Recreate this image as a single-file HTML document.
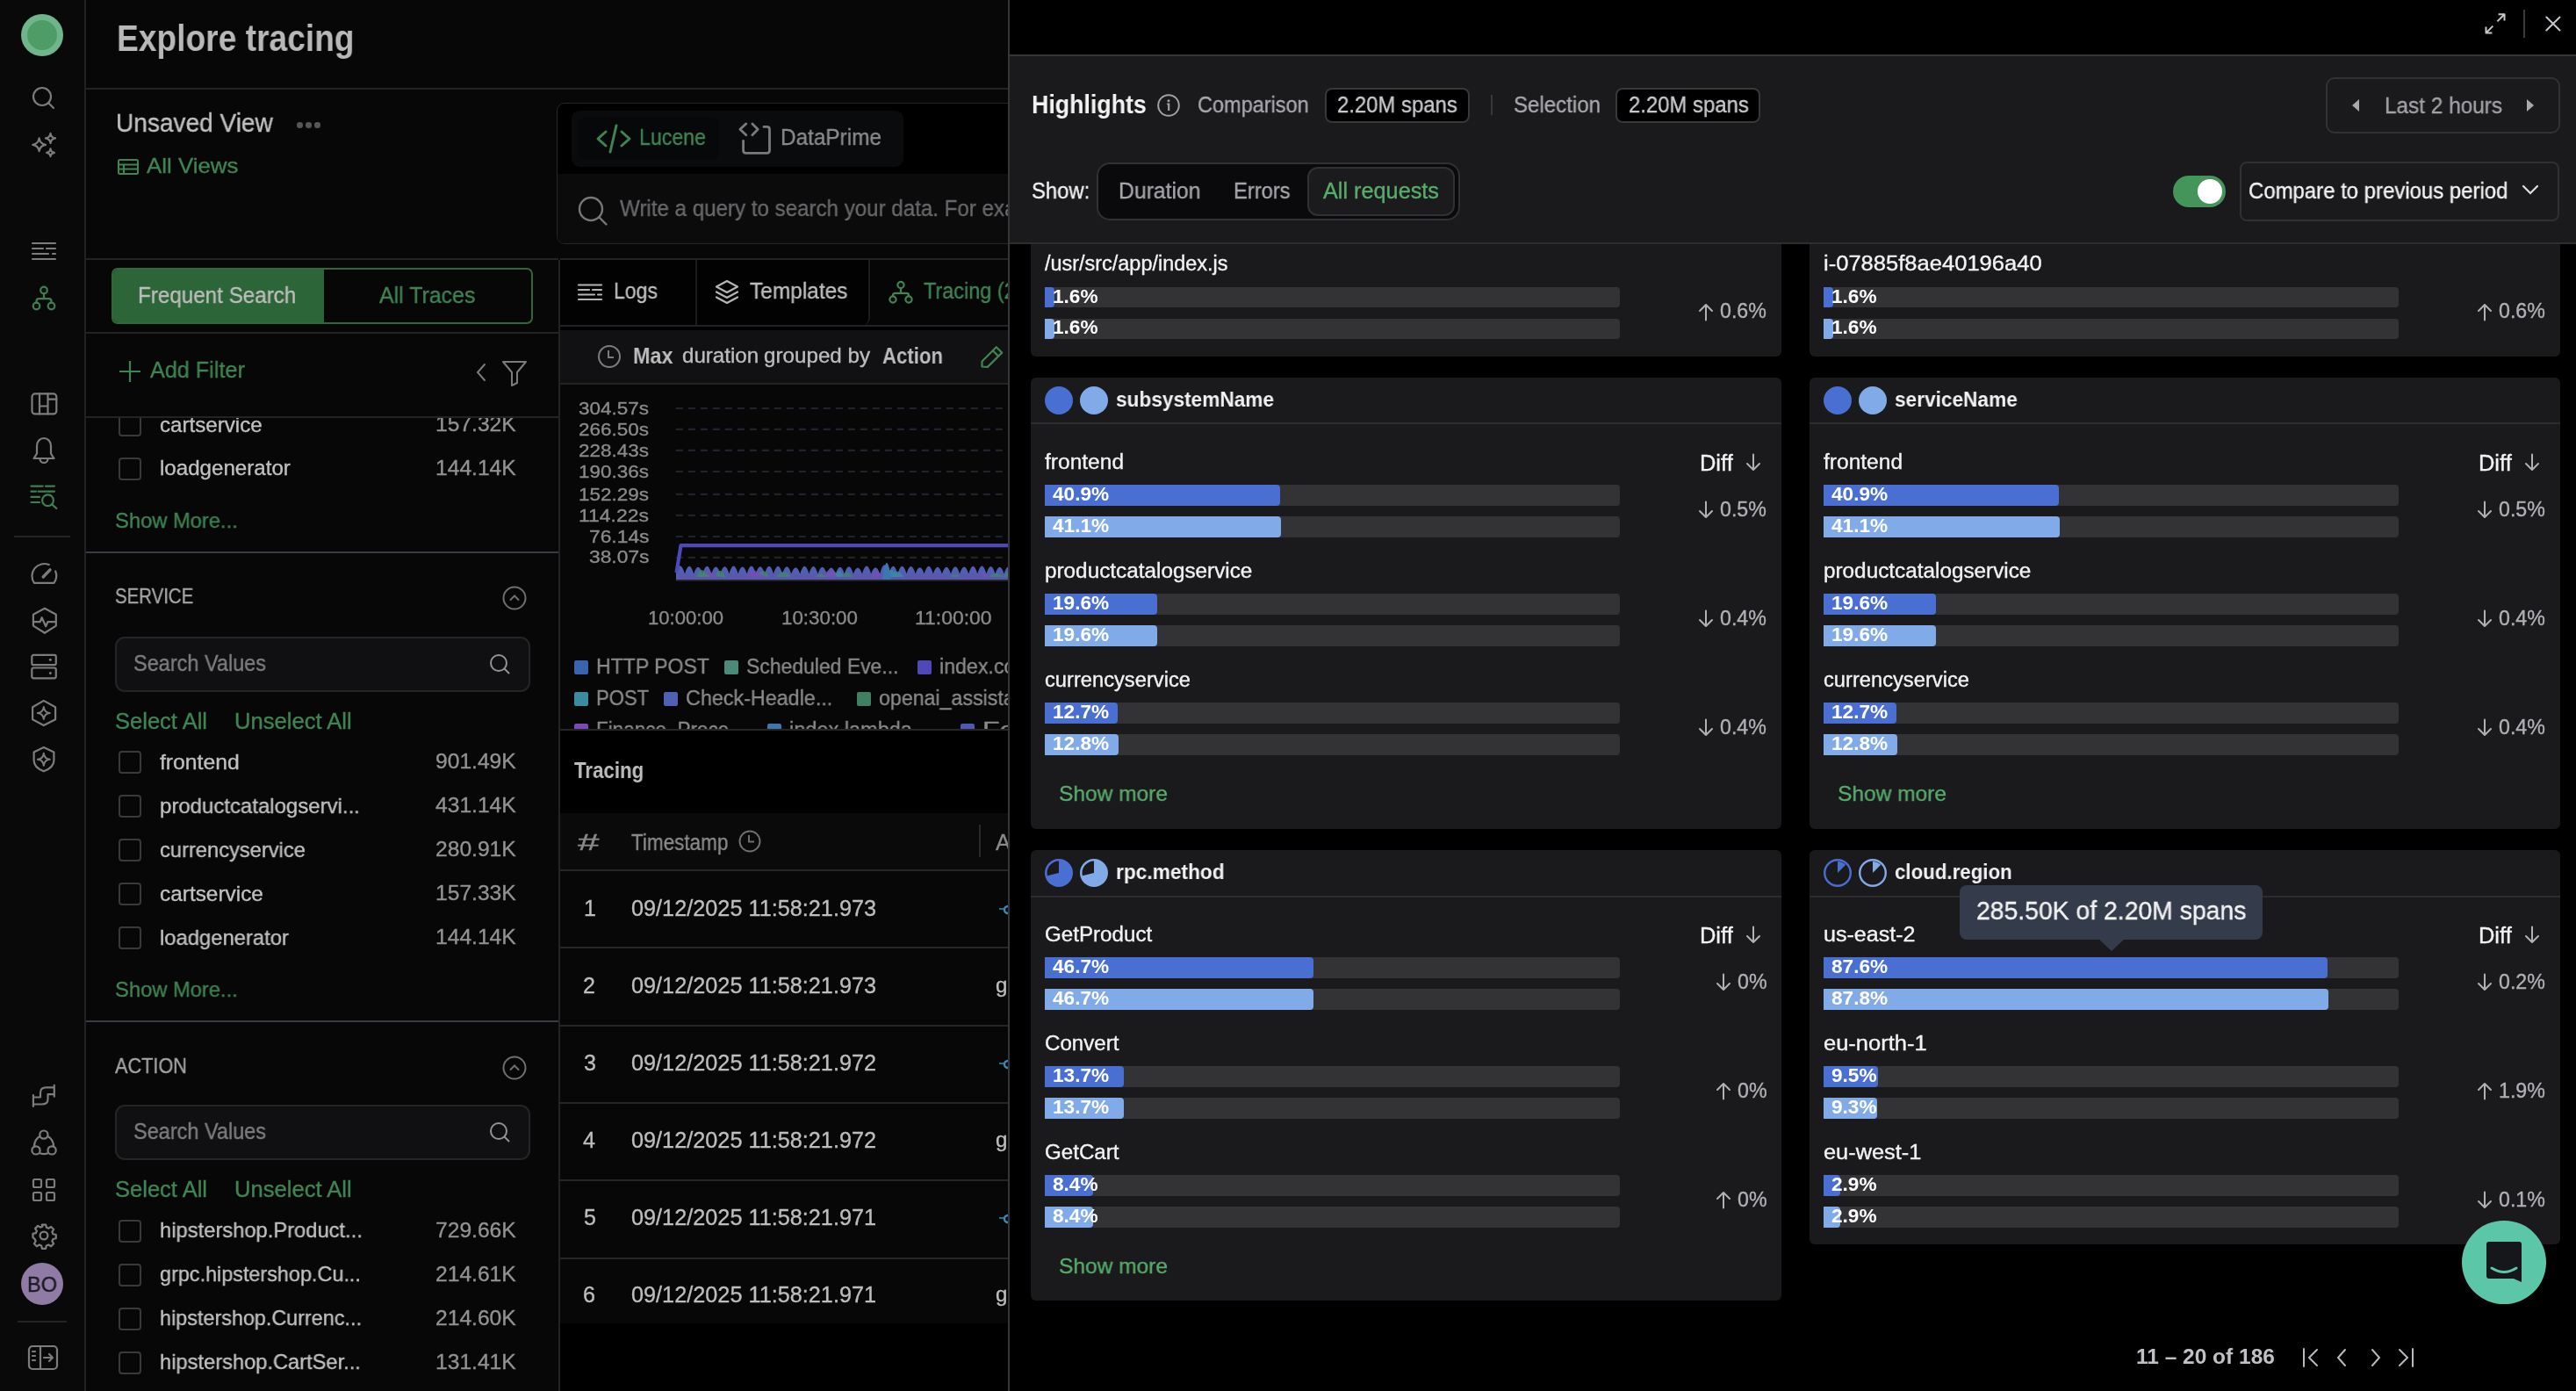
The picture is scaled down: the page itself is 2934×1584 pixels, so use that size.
<!DOCTYPE html>
<html><head><meta charset="utf-8">
<style>
*{box-sizing:border-box;margin:0;padding:0}
html,body{width:2934px;height:1584px;overflow:hidden;background:#070707;font-family:"Liberation Sans",sans-serif;}
.a{position:absolute}
.t{position:absolute;white-space:nowrap;line-height:1;will-change:transform;-webkit-text-stroke:0.35px currentColor}
svg{position:absolute;overflow:visible}
.ic{fill:none;stroke:#7c7c7c;stroke-width:2.2;stroke-linecap:round;stroke-linejoin:round}
.icg{fill:none;stroke:#3d7f50;stroke-width:2.2;stroke-linecap:round;stroke-linejoin:round}
</style></head>
<body>
<div class="a" style="left:0.0px;top:0.0px;width:96.0px;height:1584.0px;background:#090909;"></div>
<div class="a" style="left:96.0px;top:0.0px;width:2.0px;height:1584.0px;background:#222222;"></div>
<div class="a" style="left:24px;top:16px;width:48px;height:48px;border-radius:50%;background:#6fb48b"></div>
<div class="a" style="left:31px;top:23px;width:34px;height:34px;border-radius:50%;background:#4f9d66"></div>
<svg style="left:37px;top:99px;" width="26" height="26" viewBox="0 0 26 26"><circle class="ic" cx="11" cy="11" r="10"/><path class="ic" d="M18.5 18.5l5.5 5.5"/></svg>
<svg style="left:35px;top:150px;" width="30" height="30" viewBox="0 0 30 30"><path class="ic" d="M9.6 7.4Q10.56 13.84 17.0 14.8Q10.56 15.76 9.6 22.200000000000003Q8.64 15.76 2.1999999999999993 14.8Q8.64 13.84 9.6 7.4Z"/><path class="ic" d="M22.5 1.8000000000000007Q23.23 6.67 28.1 7.4Q23.23 8.13 22.5 13.0Q21.77 8.13 16.9 7.4Q21.77 6.67 22.5 1.8000000000000007Z"/><path class="ic" d="M22.5 19.4Q23.07 23.23 26.9 23.8Q23.07 24.37 22.5 28.200000000000003Q21.93 24.37 18.1 23.8Q21.93 23.23 22.5 19.4Z"/></svg>
<svg style="left:36px;top:276px;" width="28" height="22" viewBox="0 0 28 22"><path class="ic" d="M1 1h26M1 7h12M17 7h10M1 13h18M24 13h3M1 19h26"/></svg>
<svg style="left:36px;top:326px;" width="28" height="28" viewBox="0 0 28 28"><circle class="icg" cx="14" cy="4.5" r="3.8"/><circle class="icg" cx="5.5" cy="22.5" r="3.8"/><circle class="icg" cx="22.5" cy="22.5" r="3.8"/><path class="icg" d="M14 8.3v6M5.5 18.7v-1.5q0-3 3-3h11q3 0 3 3v1.5"/></svg>
<svg style="left:35px;top:447px;" width="30" height="26" viewBox="0 0 30 26"><rect class="ic" x="1.5" y="1.4" width="27.8" height="23" rx="3.5"/><path class="ic" d="M10 1.4v23M19.5 1.4v23M10 15.5h9.5M19.5 7.7h9.8"/></svg>
<svg style="left:37px;top:496px;" width="26" height="34" viewBox="0 0 26 34"><path class="ic" d="M1.5 26Q3.5 23 5 20.5V12C5 6.5 8.5 3 13 3S21 6.5 21 12V20.5Q22.5 23 24.5 26Z"/><path class="ic" d="M8.5 26.5A4.5 4.5 0 0 0 17.5 26.5"/></svg>
<svg style="left:35px;top:550px;" width="32" height="32" viewBox="0 0 32 32"><path class="icg" d="M0.5 3.6h13.2M17 3.6h10M0.5 9.7h5.5M8.6 9.7h18.4M0.5 15.9h9.5M0.5 22h9.5"/><circle class="icg" cx="19.5" cy="19.7" r="6.4"/><path class="icg" d="M24.2 24.4L29.3 28.9"/></svg>
<div class="a" style="left:16.0px;top:610.0px;width:64.0px;height:2.0px;background:#242424;"></div>
<svg style="left:35px;top:640px;" width="30" height="28" viewBox="0 0 30 28"><path class="ic" d="M28.2 10.5A13.9 13.9 0 0 1 26.5 23.8H3.9A13.9 13.9 0 0 1 20.7 3.1"/><path class="ic" style="stroke-width:3.4" d="M14.2 17L22 8.9"/></svg>
<svg style="left:36px;top:692px;" width="30" height="30" viewBox="0 0 30 30"><path class="ic" d="M14.9 0.8L27.8 7.7V20.6L14.9 28.8L1.9 20.6V7.7Z"/><path class="ic" d="M1.9 16.1H9.7L11.6 11.2L16.2 21.3L18.4 16.1H27.8"/></svg>
<svg style="left:35px;top:745px;" width="30" height="30" viewBox="0 0 30 30"><rect class="ic" x="1.3" y="0.9" width="27.5" height="11.3" rx="2"/><rect class="ic" x="1.3" y="15.5" width="27.5" height="11.8" rx="2"/><circle cx="22.3" cy="6.3" r="1.5" fill="#7c7c7c"/><circle cx="22.3" cy="21.4" r="1.5" fill="#7c7c7c"/></svg>
<svg style="left:36px;top:797px;" width="30" height="30" viewBox="0 0 30 30"><path class="ic" d="M13.8 0.9L27.1 8.2V22.2L13.8 29L1.1 22.2V8.2Z"/><path class="ic" style="stroke-width:2" d="M13.8 8Q14.50 14.30 20.8 15Q14.50 15.70 13.8 22Q13.10 15.70 6.800000000000001 15Q13.10 14.30 13.8 8Z"/></svg>
<svg style="left:37px;top:850px;" width="28" height="30" viewBox="0 0 28 30"><path class="ic" d="M12.8 1L24.4 6.4V16Q24.4 24 12.8 28.3Q1.6 24 1.6 16V6.4Z"/><path class="ic" style="stroke-width:2" d="M12.8 7.800000000000001Q13.50 14.10 19.8 14.8Q13.50 15.50 12.8 21.8Q12.10 15.50 5.800000000000001 14.8Q12.10 14.10 12.8 7.800000000000001Z"/></svg>
<svg style="left:36px;top:1234px;" width="28" height="28" viewBox="0 0 28 28"><path class="ic" d="M1.9 13V25.9M25.8 1.8V14.7M25.8 4.3H16.5Q10 4.3 10 10.5V15.5H1.9M25.8 12.2H18.5V18Q18.5 23.5 11.5 23.5H1.9"/></svg>
<svg style="left:35px;top:1286px;" width="30" height="30" viewBox="0 0 30 30"><circle class="ic" cx="14.9" cy="6.1" r="4.6"/><circle class="ic" cx="6" cy="23.9" r="4.6"/><circle class="ic" cx="24.1" cy="23.9" r="4.6"/><path class="ic" d="M10 8.2Q4.2 11.5 3.9 19.6M19.8 8.2Q25.8 11.5 26.1 19.6M10.5 27.3Q15 29 19.6 27.3"/></svg>
<svg style="left:37px;top:1342px;" width="26" height="26" viewBox="0 0 26 26"><rect class="ic" x="1" y="1" width="9" height="9" rx="1.5"/><rect class="ic" x="16" y="1" width="9" height="9" rx="1.5"/><rect class="ic" x="1" y="16" width="9" height="9" rx="1.5"/><rect class="ic" x="16" y="16" width="9" height="9" rx="1.5"/></svg>
<svg style="left:35px;top:1392px" width="30" height="30" viewBox="0 0 24 24"><path class="ic" style="stroke-width:1.8" d="M10.3 2h3.4l.6 2.6 1.9.8 2.3-1.4 2.4 2.4-1.4 2.3.8 1.9 2.7.6v3.4l-2.7.6-.8 1.9 1.4 2.3-2.4 2.4-2.3-1.4-1.9.8-.6 2.7h-3.4l-.6-2.7-1.9-.8-2.3 1.4-2.4-2.4 1.4-2.3-.8-1.9L2 13.7v-3.4l2.7-.6.8-1.9-1.4-2.3 2.4-2.4 2.3 1.4 1.9-.8z"/><circle class="ic" style="stroke-width:1.8" cx="12" cy="12" r="3.5"/></svg>
<div class="a" style="left:24px;top:1438px;width:48px;height:48px;border-radius:50%;background:#8f7ba6"></div>
<div class="t" style="left:31.0px;top:1451.1px;font-size:24.65px;color:#1c1a20;transform:scaleX(0.9547);transform-origin:0 0;">BO</div>
<div class="a" style="left:20.0px;top:1504.0px;width:56.0px;height:2.0px;background:#242424;"></div>
<svg style="left:32px;top:1532px;" width="34" height="28" viewBox="0 0 34 28"><rect class="ic" x="1" y="1" width="32" height="26" rx="4"/><path class="ic" d="M14 1v26M5 7h3M5 12h3M5 17h3M18 14h10M24 10l4 4-4 4"/></svg>
<div class="t" style="left:132.6px;top:23.3px;font-size:42.01px;color:#b8b8b8;font-weight:bold;-webkit-text-stroke:0;transform:scaleX(0.8849);transform-origin:0 0;">Explore tracing</div>
<div class="a" style="left:98.0px;top:100.0px;width:1052.0px;height:2.0px;background:#232323;"></div>
<div class="t" style="left:131.6px;top:126.4px;font-size:29.07px;color:#c0c0c0;transform:scaleX(0.9650);transform-origin:0 0;">Unsaved View</div>
<div class="a" style="left:338px;top:139px;width:6.5px;height:6.5px;border-radius:50%;background:#55555a"></div>
<div class="a" style="left:348px;top:139px;width:6.5px;height:6.5px;border-radius:50%;background:#55555a"></div>
<div class="a" style="left:358px;top:139px;width:6.5px;height:6.5px;border-radius:50%;background:#55555a"></div>
<svg style="left:134px;top:181px;" width="24" height="18" viewBox="0 0 24 18"><rect x="1" y="1" width="22" height="16" rx="1.5" fill="none" stroke="#3e8552" stroke-width="2"/><path d="M1 6.5h22M1 11.5h22M7 6.5v10.5" stroke="#3e8552" stroke-width="2" fill="none"/></svg>
<div class="t" style="left:166.6px;top:177.1px;font-size:24.71px;color:#3e8552;transform:scaleX(1.0462);transform-origin:0 0;">All Views</div>
<div class="a" style="left:98.0px;top:294.0px;width:538.0px;height:2.0px;background:#232323;"></div>
<div class="a" style="left:127px;top:305px;width:480px;height:64px;border:2px solid #2c6a3a;border-radius:7px;overflow:hidden"><div class="a" style="left:0;top:0;width:240px;height:64px;background:#2c6538"></div></div>
<div class="t" style="left:156.7px;top:323.5px;font-size:25.44px;color:#bdbdbd;transform:scaleX(0.9516);transform-origin:0 0;">Frequent Search</div>
<div class="t" style="left:432.0px;top:323.5px;font-size:25.44px;color:#3e8552;transform:scaleX(0.9797);transform-origin:0 0;">All Traces</div>
<div class="a" style="left:98.0px;top:378.0px;width:538.0px;height:2.0px;background:#232323;"></div>
<svg style="left:135px;top:410px;" width="26" height="26" viewBox="0 0 26 26"><path d="M13 1v24M1 13h24" stroke="#3e8552" stroke-width="2.2" fill="none"/></svg>
<div class="t" style="left:170.5px;top:408.8px;font-size:25.44px;color:#3e8552;transform:scaleX(0.9904);transform-origin:0 0;">Add Filter</div>
<svg style="left:541px;top:413px;" width="14" height="22" viewBox="0 0 14 22"><path d="M11 2L3 11l8 9" stroke="#7c7c7c" stroke-width="2" fill="none" stroke-linecap="round"/></svg>
<svg style="left:571px;top:410px;" width="30" height="30" viewBox="0 0 30 30"><path d="M2 2h26l-10 12v12l-6 3V14z" stroke="#7c7c7c" stroke-width="2" fill="none" stroke-linejoin="round"/></svg>
<div class="a" style="left:98.0px;top:474.0px;width:538.0px;height:2.0px;background:#232323;"></div>
<div class="a" style="left:98px;top:476px;width:538px;height:152px;overflow:hidden">
<div class="a" style="left:0;top:0;width:538px;height:152px">
<div class="a" style="left:37px;top:-5px;width:26px;height:26px;border:2px solid #3a3a3a;border-radius:4px"></div>
<div class="t" style="left:84.4px;top:-4.4px;font-size:24.14px;color:#c0c0c0;">cartservice</div>
<div class="t" style="left:398.2px;top:-4.9px;font-size:24.64px;color:#929292;">157.32K</div>
<div class="a" style="left:37px;top:44.60000000000002px;width:26px;height:26px;border:2px solid #3a3a3a;border-radius:4px"></div>
<div class="t" style="left:84.4px;top:45.2px;font-size:24.14px;color:#c0c0c0;">loadgenerator</div>
<div class="t" style="left:398.2px;top:44.7px;font-size:24.64px;color:#929292;">144.14K</div>
<div class="t" style="left:32.8px;top:105.4px;font-size:23.84px;color:#3e8552;transform:scaleX(0.9955);transform-origin:0 0;">Show More...</div>
</div></div>
<div class="a" style="left:98.0px;top:628.0px;width:538.0px;height:2.0px;background:#373b46;"></div>
<div class="t" style="left:130.8px;top:667.9px;font-size:23.26px;color:#a6a6a6;transform:scaleX(0.8773);transform-origin:0 0;">SERVICE</div>
<svg style="left:572px;top:666.6px;" width="28" height="28" viewBox="0 0 28 28"><circle cx="14" cy="14" r="12.5" stroke="#6f6f6f" stroke-width="2" fill="none"/><path d="M9.5 16l4.5-4.5 4.5 4.5" stroke="#6f6f6f" stroke-width="2" fill="none" stroke-linecap="round"/></svg>
<div class="a" style="left:130.5px;top:724.5px;width:473px;height:63px;background:#101012;border:2px solid #252527;border-radius:11px"></div>
<div class="t" style="left:152.4px;top:742.8px;font-size:25.00px;color:#7e7e80;transform:scaleX(0.9394);transform-origin:0 0;">Search Values</div>
<svg style="left:557px;top:743.5px;" width="26" height="26" viewBox="0 0 26 26"><circle cx="11" cy="11" r="9" stroke="#939393" stroke-width="2" fill="none"/><path d="M17.5 17.5l5 5" stroke="#939393" stroke-width="2" stroke-linecap="round"/></svg>
<div class="t" style="left:130.8px;top:808.9px;font-size:25.00px;color:#3e8552;transform:scaleX(1.0211);transform-origin:0 0;">Select All</div>
<div class="t" style="left:266.8px;top:808.9px;font-size:25.00px;color:#3e8552;transform:scaleX(1.0236);transform-origin:0 0;">Unselect All</div>
<div class="a" style="left:135px;top:855.3px;width:26px;height:26px;border:2px solid #3a3a3a;border-radius:4px"></div>
<div class="t" style="left:182.4px;top:855.9px;font-size:24.14px;color:#c0c0c0;transform:scaleX(1.0251);transform-origin:0 0;">frontend</div>
<div class="t" style="left:496.0px;top:855.4px;font-size:24.64px;color:#929292;">901.49K</div>
<div class="a" style="left:135px;top:905.3px;width:26px;height:26px;border:2px solid #3a3a3a;border-radius:4px"></div>
<div class="t" style="left:182.4px;top:905.9px;font-size:24.14px;color:#c0c0c0;transform:scaleX(0.9938);transform-origin:0 0;">productcatalogservi...</div>
<div class="t" style="left:496.0px;top:905.4px;font-size:24.64px;color:#929292;">431.14K</div>
<div class="a" style="left:135px;top:955.3px;width:26px;height:26px;border:2px solid #3a3a3a;border-radius:4px"></div>
<div class="t" style="left:182.4px;top:955.9px;font-size:24.14px;color:#c0c0c0;transform:scaleX(0.9822);transform-origin:0 0;">currencyservice</div>
<div class="t" style="left:496.0px;top:955.4px;font-size:24.64px;color:#929292;">280.91K</div>
<div class="a" style="left:135px;top:1005.3px;width:26px;height:26px;border:2px solid #3a3a3a;border-radius:4px"></div>
<div class="t" style="left:182.4px;top:1005.9px;font-size:24.14px;color:#c0c0c0;transform:scaleX(1.0112);transform-origin:0 0;">cartservice</div>
<div class="t" style="left:496.0px;top:1005.4px;font-size:24.64px;color:#929292;">157.33K</div>
<div class="a" style="left:135px;top:1055.3px;width:26px;height:26px;border:2px solid #3a3a3a;border-radius:4px"></div>
<div class="t" style="left:182.4px;top:1055.9px;font-size:24.14px;color:#c0c0c0;transform:scaleX(0.9868);transform-origin:0 0;">loadgenerator</div>
<div class="t" style="left:496.0px;top:1055.4px;font-size:24.64px;color:#929292;">144.14K</div>
<div class="t" style="left:130.8px;top:1115.0px;font-size:23.84px;color:#3e8552;transform:scaleX(0.9955);transform-origin:0 0;">Show More...</div>
<div class="a" style="left:98.0px;top:1162.0px;width:538.0px;height:2.0px;background:#373b46;"></div>
<div class="t" style="left:130.8px;top:1202.8px;font-size:23.26px;color:#a6a6a6;transform:scaleX(0.9333);transform-origin:0 0;">ACTION</div>
<svg style="left:572px;top:1201.5px;" width="28" height="28" viewBox="0 0 28 28"><circle cx="14" cy="14" r="12.5" stroke="#6f6f6f" stroke-width="2" fill="none"/><path d="M9.5 16l4.5-4.5 4.5 4.5" stroke="#6f6f6f" stroke-width="2" fill="none" stroke-linecap="round"/></svg>
<div class="a" style="left:130.5px;top:1258px;width:473px;height:63px;background:#101012;border:2px solid #252527;border-radius:11px"></div>
<div class="t" style="left:152.4px;top:1276.3px;font-size:25.00px;color:#7e7e80;transform:scaleX(0.9394);transform-origin:0 0;">Search Values</div>
<svg style="left:557px;top:1277px;" width="26" height="26" viewBox="0 0 26 26"><circle cx="11" cy="11" r="9" stroke="#939393" stroke-width="2" fill="none"/><path d="M17.5 17.5l5 5" stroke="#939393" stroke-width="2" stroke-linecap="round"/></svg>
<div class="t" style="left:130.8px;top:1342.4px;font-size:25.00px;color:#3e8552;transform:scaleX(1.0211);transform-origin:0 0;">Select All</div>
<div class="t" style="left:266.8px;top:1342.4px;font-size:25.00px;color:#3e8552;transform:scaleX(1.0236);transform-origin:0 0;">Unselect All</div>
<div class="a" style="left:135px;top:1388.8px;width:26px;height:26px;border:2px solid #3a3a3a;border-radius:4px"></div>
<div class="t" style="left:182.4px;top:1389.4px;font-size:24.14px;color:#c0c0c0;transform:scaleX(0.9838);transform-origin:0 0;">hipstershop.Product...</div>
<div class="t" style="left:496.0px;top:1388.9px;font-size:24.64px;color:#929292;">729.66K</div>
<div class="a" style="left:135px;top:1438.8px;width:26px;height:26px;border:2px solid #3a3a3a;border-radius:4px"></div>
<div class="t" style="left:182.4px;top:1439.4px;font-size:24.14px;color:#c0c0c0;transform:scaleX(0.9698);transform-origin:0 0;">grpc.hipstershop.Cu...</div>
<div class="t" style="left:496.0px;top:1438.9px;font-size:24.64px;color:#929292;">214.61K</div>
<div class="a" style="left:135px;top:1488.8px;width:26px;height:26px;border:2px solid #3a3a3a;border-radius:4px"></div>
<div class="t" style="left:182.4px;top:1489.4px;font-size:24.14px;color:#c0c0c0;transform:scaleX(0.9686);transform-origin:0 0;">hipstershop.Currenc...</div>
<div class="t" style="left:496.0px;top:1488.9px;font-size:24.64px;color:#929292;">214.60K</div>
<div class="a" style="left:135px;top:1538.8px;width:26px;height:26px;border:2px solid #3a3a3a;border-radius:4px"></div>
<div class="t" style="left:182.4px;top:1539.4px;font-size:24.14px;color:#c0c0c0;transform:scaleX(0.9809);transform-origin:0 0;">hipstershop.CartSer...</div>
<div class="t" style="left:496.0px;top:1538.9px;font-size:24.64px;color:#929292;">131.41K</div>
<div class="a" style="left:636.0px;top:296.0px;width:2.0px;height:1288.0px;background:#232323;"></div>
<div class="a" style="left:634px;top:117.2px;width:515px;height:161.3px;overflow:hidden">
<div class="a" style="left:0;top:0;width:600px;height:161.3px;border:1.6px solid #262626;border-radius:9px;background:#000;overflow:hidden"><div class="a" style="left:0;top:80.3px;width:600px;height:82px;background:#0b0b0c"></div></div>
<div class="a" style="left:17.0px;top:8.4px;width:377.5px;height:64.4px;background:#0a0b0d;border-radius:9px"></div>
<div class="a" style="left:25.3px;top:17.1px;width:159.7px;height:47.4px;background:#07080a;border-radius:8px"></div>
<svg style="left:45px;top:24.8px;" width="40" height="32" viewBox="0 0 40 32"><path d="M11 8L2 16l9 8M29 8l9 8-9 8M23 1L16 31" stroke="#3e8552" stroke-width="3" fill="none" stroke-linecap="round" stroke-linejoin="round"/></svg>
<div class="t" style="left:94.0px;top:27.3px;font-size:25.87px;color:#3e8552;transform:scaleX(0.8954);transform-origin:0 0;">Lucene</div>
<svg style="left:208px;top:22.8px;" width="36" height="36" viewBox="0 0 36 36"><path d="M7.8 0.9L0.9 7.2l6.9 6.5M14.9 0.9l6.3 6.3-6.3 6.5M28 4.4H31.5Q34.5 4.4 34.5 7.4V31.3Q34.5 34.3 31.5 34.3H7.6Q4.6 34.3 4.6 31.3V20.5" stroke="#7a7a7e" stroke-width="2.8" fill="none" stroke-linecap="round" stroke-linejoin="round"/></svg>
<div class="t" style="left:255.0px;top:27.3px;font-size:25.87px;color:#8a8a8d;transform:scaleX(0.9410);transform-origin:0 0;">DataPrime</div>
<svg style="left:25px;top:106.8px;" width="34" height="34" viewBox="0 0 34 34"><circle cx="14" cy="14" r="13" stroke="#77777a" stroke-width="2.4" fill="none"/><path d="M23.5 23.5l8 8" stroke="#77777a" stroke-width="2.4" stroke-linecap="round"/></svg>
<div class="t" style="left:72.3px;top:107.6px;font-size:25.29px;color:#68686c;transform:scaleX(0.9544);transform-origin:0 0;">Write a query to search your data. For example</div>
</div>
<div class="a" style="left:638px;top:102px;width:510px;height:1482px;overflow:hidden">
<div class="a" style="left:-8.0px;top:192.0px;width:520.0px;height:2.0px;background:#232323;"></div>
<div class="a" style="left:0.0px;top:194.0px;width:511.0px;height:74.0px;background:#060607;"></div>
<div class="a" style="left:0;top:194px;width:353px;height:74px;background:#020202;border-radius:0 0 8px 0;border-right:2px solid #1c1c1c"></div>
<div class="a" style="left:154px;top:194px;width:2px;height:74px;background:#1c1c1c"></div>
<svg style="left:20px;top:221px;" width="28" height="20" viewBox="0 0 28 20"><path d="M1 1.5h26M1 7h12M17 7h10M1 12.5h18M23 12.5h4M1 18h26" stroke="#b5b5b5" stroke-width="2.2" fill="none" stroke-linecap="round"/></svg>
<div class="t" style="left:61.0px;top:217.3px;font-size:25.73px;color:#bdbdbd;transform:scaleX(0.8963);transform-origin:0 0;">Logs</div>
<svg style="left:177px;top:217px;" width="26" height="28" viewBox="0 0 26 28"><path d="M13 1L25 7.5 13 14 1 7.5Z M1 13.5L13 20 25 13.5 M1 19.5L13 26 25 19.5" stroke="#b5b5b5" stroke-width="2.2" fill="none" stroke-linejoin="round" stroke-linecap="round"/></svg>
<div class="t" style="left:216.0px;top:217.3px;font-size:25.73px;color:#bdbdbd;transform:scaleX(0.9509);transform-origin:0 0;">Templates</div>
<svg style="left:374px;top:218px;" width="28" height="26" viewBox="0 0 28 26"><circle cx="14" cy="4.5" r="3.6" stroke="#3e8552" stroke-width="2.2" fill="none"/><circle cx="5" cy="21" r="3.6" stroke="#3e8552" stroke-width="2.2" fill="none"/><circle cx="23" cy="21" r="3.6" stroke="#3e8552" stroke-width="2.2" fill="none"/><path d="M14 8.1v5M5 17.4v-1q0-2.5 2.5-2.5h13q2.5 0 2.5 2.5v1" stroke="#3e8552" stroke-width="2.2" fill="none"/></svg>
<div class="t" style="left:414.3px;top:217.3px;font-size:25.73px;color:#3e8552;transform:scaleX(0.9113);transform-origin:0 0;">Tracing (2.20M)</div>
<div class="a" style="left:0.0px;top:268.0px;width:511.0px;height:2.0px;background:#232323;"></div>
<div class="a" style="left:0.0px;top:270.0px;width:511.0px;height:4.0px;background:#000000;"></div>
<div class="a" style="left:0.0px;top:274.0px;width:511.0px;height:60.0px;background:#111113;"></div>
<svg style="left:43px;top:291px;" width="26" height="26" viewBox="0 0 26 26"><circle cx="13" cy="13" r="12" stroke="#7c7c7c" stroke-width="2" fill="none"/><path d="M12 6v8h6" stroke="#7c7c7c" stroke-width="2" fill="none"/></svg>
<div class="t" style="left:82.8px;top:291.0px;font-size:25.00px;color:#bdbdbd;font-weight:bold;-webkit-text-stroke:0;transform:scaleX(0.9356);transform-origin:0 0;">Max</div>
<div class="t" style="left:139.4px;top:292.1px;font-size:23.72px;color:#bdbdbd;transform:scaleX(1.0171);transform-origin:0 0;">duration</div>
<div class="t" style="left:232.2px;top:292.1px;font-size:23.72px;color:#bdbdbd;transform:scaleX(1.0201);transform-origin:0 0;">grouped by</div>
<div class="t" style="left:367.0px;top:291.0px;font-size:25.00px;color:#bdbdbd;font-weight:bold;-webkit-text-stroke:0;transform:scaleX(0.8872);transform-origin:0 0;">Action</div>
<svg style="left:479px;top:291px;" width="28" height="27" viewBox="0 0 28 27"><path d="M1.5 24.5V18.5L17.8 2.2L24.2 8.6L7.9 24.9Z M13.8 6.2L20.2 12.6" stroke="#3e8552" stroke-width="2.2" fill="none" stroke-linejoin="round"/></svg>
<div class="a" style="left:0.0px;top:334.0px;width:511.0px;height:2.0px;background:#232323;"></div>
<div class="t" style="left:21.0px;top:352.0px;font-size:21.06px;color:#8a8a8a;transform:scaleX(1.0675);transform-origin:0 0;">304.57s</div>
<div class="t" style="left:21.0px;top:376.1px;font-size:21.06px;color:#8a8a8a;transform:scaleX(1.0675);transform-origin:0 0;">266.50s</div>
<div class="t" style="left:21.0px;top:400.3px;font-size:21.06px;color:#8a8a8a;transform:scaleX(1.0675);transform-origin:0 0;">228.43s</div>
<div class="t" style="left:21.0px;top:424.0px;font-size:21.06px;color:#8a8a8a;transform:scaleX(1.0675);transform-origin:0 0;">190.36s</div>
<div class="t" style="left:21.0px;top:450.0px;font-size:21.06px;color:#8a8a8a;transform:scaleX(1.0675);transform-origin:0 0;">152.29s</div>
<div class="t" style="left:21.0px;top:474.2px;font-size:21.06px;color:#8a8a8a;transform:scaleX(1.0902);transform-origin:0 0;">114.22s</div>
<div class="t" style="left:32.5px;top:497.9px;font-size:21.06px;color:#8a8a8a;transform:scaleX(1.0833);transform-origin:0 0;">76.14s</div>
<div class="t" style="left:32.5px;top:521.4px;font-size:21.06px;color:#8a8a8a;transform:scaleX(1.0833);transform-origin:0 0;">38.07s</div>
<svg style="left:0;top:0" width="511" height="1482"><path d="M131.79999999999995 363H522" stroke="#1e242d" stroke-width="2.2" stroke-dasharray="8 6"/><path d="M131.79999999999995 386.9H522" stroke="#1e242d" stroke-width="2.2" stroke-dasharray="8 6"/><path d="M131.79999999999995 410.9H522" stroke="#1e242d" stroke-width="2.2" stroke-dasharray="8 6"/><path d="M131.79999999999995 435H522" stroke="#1e242d" stroke-width="2.2" stroke-dasharray="8 6"/><path d="M131.79999999999995 460.79999999999995H522" stroke="#1e242d" stroke-width="2.2" stroke-dasharray="8 6"/><path d="M131.79999999999995 484.9H522" stroke="#1e242d" stroke-width="2.2" stroke-dasharray="8 6"/><path d="M131.79999999999995 509H522" stroke="#1e242d" stroke-width="2.2" stroke-dasharray="8 6"/><path d="M131.79999999999995 532.8H522" stroke="#1e242d" stroke-width="2.2" stroke-dasharray="8 6"/><path d="M131.79999999999995 558.8H522" stroke="#2a2a2a" stroke-width="2"/><path d="M132 558 L132 548 Q137.0 534.8 142.0 551.5 Q147.1 534.1 152.1 551.5 Q157.2 536.1 162.2 551.5 Q167.3 533.8 172.3 551.5 Q177.4 535.6 182.4 551.5 Q187.5 535.0 192.5 551.5 Q197.6 533.7 202.6 551.5 Q207.7 535.5 212.7 551.5 Q217.8 533.6 222.8 551.5 Q227.9 535.2 232.9 551.5 Q238.0 533.8 243.0 551.5 Q248.1 533.9 253.1 551.5 Q258.2 535.2 263.2 551.5 Q268.3 536.8 273.3 551.5 Q278.4 534.0 283.4 551.5 Q288.5 534.4 293.5 551.5 Q298.6 536.0 303.6 551.5 Q308.7 537.3 313.7 551.5 Q318.8 535.8 323.8 551.5 Q328.9 535.1 333.9 551.5 Q339.0 537.4 344.0 551.5 Q349.1 533.7 354.1 551.5 Q359.2 536.9 364.2 551.5 Q369.3 531.0 374.3 551.5 Q379.4 534.1 384.4 551.5 Q389.5 534.0 394.5 551.5 Q399.6 534.7 404.6 551.5 Q409.7 536.8 414.7 551.5 Q419.8 534.2 424.8 551.5 Q429.9 535.8 434.9 551.5 Q440.0 536.1 445.0 551.5 Q450.1 535.0 455.1 551.5 Q460.2 535.7 465.2 551.5 Q470.3 533.8 475.3 551.5 Q480.4 533.7 485.4 551.5 Q490.5 534.3 495.5 551.5 Q500.6 536.2 505.6 551.5 Q510.7 535.2 515.7 551.5 Q520.8 534.8 525.8 551.5 L522 558Z" fill="#4f5fb3"/><path d="M132 558V551H522V558Z" fill="#5858ae"/><path d="M301.3 555Q309.4 540.4 317.5 555Z" fill="#3a8ba0" opacity="0.8"/><path d="M301.0 555Q309.2 547.1 317.4 555Z" fill="#3a8ba0" opacity="0.8"/><path d="M312.7 555Q318.0 541.1 323.4 555Z" fill="#3a8ba0" opacity="0.8"/><path d="M245.7 555Q254.3 543.6 262.8 555Z" fill="#3f8a6a" opacity="0.8"/><path d="M367.9 555Q376.7 539.2 385.6 555Z" fill="#3a8ba0" opacity="0.8"/><path d="M376.5 555Q384.0 542.5 391.4 555Z" fill="#3a8ba0" opacity="0.8"/><path d="M444.0 555Q449.7 548.4 455.5 555Z" fill="#3f8a6a" opacity="0.8"/><path d="M225.2 555Q231.5 541.2 237.8 555Z" fill="#3f8a6a" opacity="0.8"/><path d="M353.1 555Q360.7 543.8 368.2 555Z" fill="#7a4ab8" opacity="0.8"/><path d="M320.8 555Q326.9 544.4 333.0 555Z" fill="#3f8a6a" opacity="0.8"/><path d="M504.9 555Q511.1 541.9 517.4 555Z" fill="#3f8a6a" opacity="0.8"/><path d="M219.7 555Q227.0 548.7 234.2 555Z" fill="#7a4ab8" opacity="0.8"/><path d="M175.4 555Q181.9 540.5 188.5 555Z" fill="#3f8a6a" opacity="0.8"/><path d="M487.8 555Q496.5 546.9 505.2 555Z" fill="#3f8a6a" opacity="0.8"/><path d="M154.8 555Q161.4 539.2 167.9 555Z" fill="#3f8a6a" opacity="0.8"/><path d="M162.9 555Q169.0 541.2 175.1 555Z" fill="#7a4ab8" opacity="0.8"/><path d="M167.6 555Q174.2 548.8 180.9 555Z" fill="#7a4ab8" opacity="0.8"/><path d="M478.0 555Q483.5 546.5 488.9 555Z" fill="#7a4ab8" opacity="0.8"/><path d="M156.9 555Q164.2 547.2 171.4 555Z" fill="#3f8a6a" opacity="0.8"/><path d="M299.5 555Q307.5 539.1 315.6 555Z" fill="#7a4ab8" opacity="0.8"/><path d="M290.4 555Q297.1 547.8 303.8 555Z" fill="#3f8a6a" opacity="0.8"/><path d="M211.9 555Q220.8 540.4 229.7 555Z" fill="#7a4ab8" opacity="0.8"/><path d="M367 558Q372 520 377 558Z" fill="#3a78b0"/><path d="M132.5 550L137.5 519.2H522" stroke="#4f48b8" stroke-width="4.2" fill="none" stroke-linejoin="round"/></svg>
<div class="t" style="left:99.6px;top:591.4px;font-size:21.63px;color:#8a8a8a;transform:scaleX(1.0213);transform-origin:0 0;">10:00:00</div>
<div class="t" style="left:251.7px;top:591.4px;font-size:21.63px;color:#8a8a8a;transform:scaleX(1.0331);transform-origin:0 0;">10:30:00</div>
<div class="t" style="left:404.3px;top:591.4px;font-size:21.63px;color:#8a8a8a;transform:scaleX(1.0605);transform-origin:0 0;">11:00:00</div>
<div class="a" style="left:0;top:638px;width:511px;height:91px;overflow:hidden">
<div class="a" style="left:16.3px;top:12.2px;width:16.0px;height:16.0px;background:#3a64b0;border-radius:2px"></div>
<div class="t" style="left:41.3px;top:6.9px;font-size:24.42px;color:#8a8a8a;transform:scaleX(0.9452);transform-origin:0 0;">HTTP POST</div>
<div class="a" style="left:187.1px;top:12.2px;width:16.0px;height:16.0px;background:#4a8a78;border-radius:2px"></div>
<div class="t" style="left:212.1px;top:6.9px;font-size:24.42px;color:#8a8a8a;transform:scaleX(0.9398);transform-origin:0 0;">Scheduled Eve...</div>
<div class="a" style="left:406.9px;top:12.2px;width:16.0px;height:16.0px;background:#5048b8;border-radius:2px"></div>
<div class="t" style="left:431.9px;top:6.9px;font-size:24.42px;color:#8a8a8a;transform:scaleX(0.9499);transform-origin:0 0;">index.controller</div>
<div class="a" style="left:16.3px;top:48.2px;width:16.0px;height:16.0px;background:#3a8ba0;border-radius:2px"></div>
<div class="t" style="left:41.3px;top:42.9px;font-size:24.42px;color:#8a8a8a;transform:scaleX(0.9055);transform-origin:0 0;">POST</div>
<div class="a" style="left:118.2px;top:48.2px;width:16.0px;height:16.0px;background:#4f60b5;border-radius:2px"></div>
<div class="t" style="left:143.2px;top:42.9px;font-size:24.42px;color:#8a8a8a;transform:scaleX(0.9556);transform-origin:0 0;">Check-Headle...</div>
<div class="a" style="left:338.2px;top:48.2px;width:16.0px;height:16.0px;background:#3f7f62;border-radius:2px"></div>
<div class="t" style="left:363.2px;top:42.9px;font-size:24.42px;color:#8a8a8a;transform:scaleX(0.9500);transform-origin:0 0;">openai_assistant</div>
<div class="a" style="left:16.3px;top:84.2px;width:16.0px;height:16.0px;background:#7a4ab8;border-radius:2px"></div>
<div class="t" style="left:41.3px;top:78.9px;font-size:24.42px;color:#8a8a8a;transform:scaleX(0.9209);transform-origin:0 0;">Finance_Proce...</div>
<div class="a" style="left:236.2px;top:84.2px;width:16.0px;height:16.0px;background:#3f78a8;border-radius:2px"></div>
<div class="t" style="left:261.2px;top:78.9px;font-size:24.42px;color:#8a8a8a;transform:scaleX(0.9639);transform-origin:0 0;">index.lambda</div>
<div class="a" style="left:456.4px;top:84.2px;width:16.0px;height:16.0px;background:#5058b0;border-radius:2px"></div>
<div class="t" style="left:481.4px;top:78.9px;font-size:24.42px;color:#8a8a8a;transform:scaleX(1.3100);transform-origin:0 0;">Fetch</div>
</div>
<div class="a" style="left:0.0px;top:728.0px;width:511.0px;height:2.0px;background:#262626;"></div>
<div class="a" style="left:0.0px;top:730.0px;width:511.0px;height:94.0px;background:#000000;"></div>
<div class="t" style="left:16.0px;top:763.3px;font-size:25.87px;color:#bdbdbd;font-weight:bold;-webkit-text-stroke:0;transform:scaleX(0.8607);transform-origin:0 0;">Tracing</div>
<div class="a" style="left:0.0px;top:824.0px;width:511.0px;height:64.0px;background:#0a0a0a;"></div>
<div class="t" style="left:19.9px;top:844.8px;font-size:25.44px;color:#8a8a8a;transform:scaleX(1.7319);transform-origin:0 0;">#</div>
<div class="t" style="left:80.6px;top:844.8px;font-size:25.44px;color:#8a8a8a;transform:scaleX(0.8843);transform-origin:0 0;">Timestamp</div>
<svg style="left:203px;top:843px;" width="26" height="26" viewBox="0 0 26 26"><circle cx="13" cy="13" r="11.5" stroke="#6f6f6f" stroke-width="2" fill="none"/><path d="M12 6v7.5h6" stroke="#6f6f6f" stroke-width="2" fill="none"/></svg>
<div class="a" style="left:476.5px;top:837.0px;width:2.0px;height:37.0px;background:#2a2a2a;"></div>
<div class="t" style="left:496.0px;top:844.8px;font-size:25.44px;color:#8a8a8a;">Action</div>
<div class="a" style="left:0.0px;top:888.0px;width:511.0px;height:2.0px;background:#262626;"></div>
<div class="a" style="left:0.0px;top:890.0px;width:511.0px;height:86.3px;background:#070707;"></div>
<div class="t" style="left:26.6px;top:919.6px;font-size:25.07px;color:#bdbdbd;">1</div>
<div class="t" style="left:80.6px;top:919.6px;font-size:25.07px;color:#bdbdbd;transform:scaleX(1.0080);transform-origin:0 0;">09/12/2025 11:58:21.973</div>
<svg style="left:499px;top:926.8px;" width="16" height="14" viewBox="0 0 16 14"><path d="M1 6h6" stroke="#3a8ab8" stroke-width="1.5"/><circle cx="11" cy="7" r="4" stroke="#3a8ab8" stroke-width="2.4" fill="none"/></svg>
<div class="a" style="left:0.0px;top:976.3px;width:511.0px;height:2.0px;background:#262626;"></div>
<div class="a" style="left:0.0px;top:978.3px;width:511.0px;height:86.3px;background:#070707;"></div>
<div class="t" style="left:25.5px;top:1007.6px;font-size:25.07px;color:#bdbdbd;">2</div>
<div class="t" style="left:80.6px;top:1007.6px;font-size:25.07px;color:#bdbdbd;transform:scaleX(1.0080);transform-origin:0 0;">09/12/2025 11:58:21.973</div>
<div class="t" style="left:496.0px;top:1008.4px;font-size:24.14px;color:#bdbdbd;">grpc</div>
<div class="a" style="left:0.0px;top:1064.6px;width:511.0px;height:2.0px;background:#262626;"></div>
<div class="a" style="left:0.0px;top:1066.6px;width:511.0px;height:86.3px;background:#070707;"></div>
<div class="t" style="left:26.6px;top:1095.6px;font-size:25.07px;color:#bdbdbd;">3</div>
<div class="t" style="left:80.6px;top:1095.6px;font-size:25.07px;color:#bdbdbd;transform:scaleX(1.0080);transform-origin:0 0;">09/12/2025 11:58:21.972</div>
<svg style="left:499px;top:1102.8px;" width="16" height="14" viewBox="0 0 16 14"><path d="M1 6h6" stroke="#3a8ab8" stroke-width="1.5"/><circle cx="11" cy="7" r="4" stroke="#3a8ab8" stroke-width="2.4" fill="none"/></svg>
<div class="a" style="left:0.0px;top:1152.9px;width:511.0px;height:2.0px;background:#262626;"></div>
<div class="a" style="left:0.0px;top:1154.9px;width:511.0px;height:86.3px;background:#070707;"></div>
<div class="t" style="left:25.5px;top:1183.6px;font-size:25.07px;color:#bdbdbd;">4</div>
<div class="t" style="left:80.6px;top:1183.6px;font-size:25.07px;color:#bdbdbd;transform:scaleX(1.0080);transform-origin:0 0;">09/12/2025 11:58:21.972</div>
<div class="t" style="left:496.0px;top:1184.4px;font-size:24.14px;color:#bdbdbd;">grpc</div>
<div class="a" style="left:0.0px;top:1241.2px;width:511.0px;height:2.0px;background:#262626;"></div>
<div class="a" style="left:0.0px;top:1243.2px;width:511.0px;height:86.3px;background:#070707;"></div>
<div class="t" style="left:26.6px;top:1271.6px;font-size:25.07px;color:#bdbdbd;">5</div>
<div class="t" style="left:80.6px;top:1271.6px;font-size:25.07px;color:#bdbdbd;transform:scaleX(1.0080);transform-origin:0 0;">09/12/2025 11:58:21.971</div>
<svg style="left:499px;top:1278.8px;" width="16" height="14" viewBox="0 0 16 14"><path d="M1 6h6" stroke="#3a8ab8" stroke-width="1.5"/><circle cx="11" cy="7" r="4" stroke="#3a8ab8" stroke-width="2.4" fill="none"/></svg>
<div class="a" style="left:0.0px;top:1329.5px;width:511.0px;height:2.0px;background:#262626;"></div>
<div class="a" style="left:0.0px;top:1331.5px;width:511.0px;height:73.5px;background:#070707;"></div>
<div class="t" style="left:25.5px;top:1359.6px;font-size:25.07px;color:#bdbdbd;">6</div>
<div class="t" style="left:80.6px;top:1359.6px;font-size:25.07px;color:#bdbdbd;transform:scaleX(1.0080);transform-origin:0 0;">09/12/2025 11:58:21.971</div>
<div class="t" style="left:496.0px;top:1360.4px;font-size:24.14px;color:#bdbdbd;">grpc</div>
<div class="a" style="left:0.0px;top:1405.0px;width:511.0px;height:80.0px;background:#000000;"></div>
</div>
<div class="a" style="left:1148.0px;top:0.0px;width:2.0px;height:1584.0px;background:#363638;"></div>
<div class="a" style="left:1150.0px;top:0.0px;width:1784.0px;height:1584.0px;background:#000000;"></div>
<div class="a" style="left:1150.0px;top:62.0px;width:1784.0px;height:2.0px;background:#363638;"></div>
<svg style="left:2826px;top:10px;" width="32" height="32" viewBox="0 0 32 32"><path d="M18.4 14.4L26.5 6.3M19.6 6.3H26.5V13.4M13.4 19.6L5.5 27.5M5.5 20.6V27.5H12.4" stroke="#c5c5ca" stroke-width="2" fill="none" stroke-linejoin="round"/></svg>
<div class="a" style="left:2874.0px;top:11.0px;width:2.0px;height:32.0px;background:#3a3a3c;"></div>
<svg style="left:2896px;top:15px;" width="24" height="24" viewBox="0 0 24 24"><path d="M4.3 4.5L19.5 19.5M19.5 4.5L4.3 19.5" stroke="#c5c5ca" stroke-width="2" stroke-linecap="round"/></svg>
<div class="a" style="left:1150.0px;top:64.0px;width:1784.0px;height:212.0px;background:#1a1a1c;"></div>
<div class="a" style="left:1150.0px;top:276.0px;width:1784.0px;height:2.0px;background:#2e2e30;"></div>
<div class="t" style="left:1175.2px;top:103.9px;font-size:30.09px;color:#f2f2f2;font-weight:bold;-webkit-text-stroke:0;transform:scaleX(0.8894);transform-origin:0 0;">Highlights</div>
<svg style="left:1318px;top:107px;" width="26" height="26" viewBox="0 0 26 26"><circle cx="13" cy="13" r="11.8" stroke="#a0a0a5" stroke-width="2" fill="none"/><circle cx="13" cy="7.8" r="1.5" fill="#a0a0a5"/><path d="M11.2 11.5h2v7.5" stroke="#a0a0a5" stroke-width="2.2" fill="none"/></svg>
<div class="t" style="left:1363.7px;top:107.0px;font-size:25.29px;color:#a8a8ad;transform:scaleX(0.9293);transform-origin:0 0;">Comparison</div>
<div class="a" style="left:1508.5px;top:100.3px;width:165.2px;height:39.5px;background:#000;border:2px solid #38383b;border-radius:8px"></div>
<div class="t" style="left:1522.8px;top:106.7px;font-size:25.21px;color:#c8c8cc;transform:scaleX(0.9476);transform-origin:0 0;">2.20M spans</div>
<div class="a" style="left:1698.0px;top:108.3px;width:2.0px;height:23.2px;background:#38383b;"></div>
<div class="t" style="left:1724.0px;top:107.0px;font-size:25.29px;color:#a8a8ad;transform:scaleX(0.9515);transform-origin:0 0;">Selection</div>
<div class="a" style="left:1840.3px;top:100.3px;width:165.2px;height:39.5px;background:#000;border:2px solid #38383b;border-radius:8px"></div>
<div class="t" style="left:1854.6px;top:106.7px;font-size:25.21px;color:#c8c8cc;transform:scaleX(0.9476);transform-origin:0 0;">2.20M spans</div>
<div class="a" style="left:2649px;top:88px;width:267px;height:64px;border:2px solid #323235;border-radius:10px"></div>
<svg style="left:2677px;top:112px;" width="12" height="16" viewBox="0 0 12 16"><path d="M10 1L2 8l8 7Z" fill="#a8a8ad"/></svg>
<div class="t" style="left:2715.6px;top:107.9px;font-size:25.29px;color:#a2a2a7;transform:scaleX(0.9635);transform-origin:0 0;">Last 2 hours</div>
<svg style="left:2876px;top:112px;" width="12" height="16" viewBox="0 0 12 16"><path d="M2 1l8 7-8 7Z" fill="#a8a8ad"/></svg>
<div class="t" style="left:1174.5px;top:204.8px;font-size:25.15px;color:#f2f2f2;transform:scaleX(0.9472);transform-origin:0 0;">Show:</div>
<div class="a" style="left:1249.2px;top:184.5px;width:413.4px;height:66.6px;background:#0a0a0c;border:2px solid #313134;border-radius:15px"></div>
<div class="t" style="left:1274.0px;top:204.8px;font-size:25.15px;color:#a5a5aa;transform:scaleX(0.9837);transform-origin:0 0;">Duration</div>
<div class="t" style="left:1405.3px;top:204.8px;font-size:25.15px;color:#a5a5aa;transform:scaleX(0.9437);transform-origin:0 0;">Errors</div>
<div class="a" style="left:1489px;top:190.2px;width:168px;height:55.5px;background:#1b1b1e;border:2px solid #313134;border-radius:12px"></div>
<div class="t" style="left:1506.8px;top:204.8px;font-size:25.15px;color:#58ad6b;transform:scaleX(1.0048);transform-origin:0 0;">All requests</div>
<div class="a" style="left:2474.6px;top:199.8px;width:60px;height:36px;border-radius:18px;background:#43955a"></div>
<div class="a" style="left:2502.8px;top:203.9px;width:28.2px;height:28.2px;border-radius:50%;background:#fff"></div>
<div class="a" style="left:2551px;top:184.3px;width:364px;height:67.6px;border:2px solid #303033;border-radius:8px"></div>
<div class="t" style="left:2561.3px;top:205.3px;font-size:25.15px;color:#f2f2f2;transform:scaleX(0.9523);transform-origin:0 0;">Compare to previous period</div>
<svg style="left:2872px;top:210px;" width="20" height="14" viewBox="0 0 20 14"><path d="M2 2l8 8 8-8" stroke="#e0e0e0" stroke-width="2.2" fill="none" stroke-linecap="round"/></svg>
<div class="a" style="left:1151px;top:278px;width:1783px;height:1306px;overflow:hidden">
<div class="a" style="left:23.0px;top:-78.0px;width:855.0px;height:205.6px;background:#1a1a1d;border-radius:6px"></div>
<div class="t" style="left:39.0px;top:11.4px;font-size:23.45px;color:#f2f2f2;">/usr/src/app/index.js</div>
<div class="a" style="left:39.0px;top:48.7px;width:655.0px;height:23.6px;background:#333336;border-radius:0 4px 4px 0"></div>
<div class="a" style="left:39.0px;top:48.7px;width:10.5px;height:23.6px;background:#4a6fd3;border-radius:0 4px 4px 0"></div>
<div class="t" style="left:47.5px;top:48.5px;font-size:22.64px;color:#ffffff;font-weight:bold;-webkit-text-stroke:0;">1.6%</div>
<div class="a" style="left:39.0px;top:84.6px;width:655.0px;height:23.6px;background:#333336;border-radius:0 4px 4px 0"></div>
<div class="a" style="left:39.0px;top:84.6px;width:10.5px;height:23.6px;background:#80aae8;border-radius:0 4px 4px 0"></div>
<div class="t" style="left:47.5px;top:84.4px;font-size:22.64px;color:#ffffff;font-weight:bold;-webkit-text-stroke:0;">1.6%</div>
<div class="t" style="left:808.1px;top:65.1px;font-size:23.21px;color:#b0b0b5;">0.6%</div>
<svg style="left:784.1px;top:67.6px;" width="16" height="19" viewBox="0 0 16 19"><path d="M8 18.5V1M1 8L8 1l7 7" stroke="#b0b0b5" stroke-width="2" fill="none" stroke-linecap="round" stroke-linejoin="round"/></svg>
<div class="a" style="left:910.0px;top:-78.0px;width:855.0px;height:205.6px;background:#1a1a1d;border-radius:6px"></div>
<div class="t" style="left:926.0px;top:11.4px;font-size:23.45px;color:#f2f2f2;transform:scaleX(1.0903);transform-origin:0 0;">i-07885f8ae40196a40</div>
<div class="a" style="left:926.0px;top:48.7px;width:655.0px;height:23.6px;background:#333336;border-radius:0 4px 4px 0"></div>
<div class="a" style="left:926.0px;top:48.7px;width:10.5px;height:23.6px;background:#4a6fd3;border-radius:0 4px 4px 0"></div>
<div class="t" style="left:934.5px;top:48.5px;font-size:22.64px;color:#ffffff;font-weight:bold;-webkit-text-stroke:0;">1.6%</div>
<div class="a" style="left:926.0px;top:84.6px;width:655.0px;height:23.6px;background:#333336;border-radius:0 4px 4px 0"></div>
<div class="a" style="left:926.0px;top:84.6px;width:10.5px;height:23.6px;background:#80aae8;border-radius:0 4px 4px 0"></div>
<div class="t" style="left:934.5px;top:84.4px;font-size:22.64px;color:#ffffff;font-weight:bold;-webkit-text-stroke:0;">1.6%</div>
<div class="t" style="left:1695.1px;top:65.1px;font-size:23.21px;color:#b0b0b5;">0.6%</div>
<svg style="left:1671.1px;top:67.6px;" width="16" height="19" viewBox="0 0 16 19"><path d="M8 18.5V1M1 8L8 1l7 7" stroke="#b0b0b5" stroke-width="2" fill="none" stroke-linecap="round" stroke-linejoin="round"/></svg>
<div class="a" style="left:23.0px;top:152.0px;width:855.0px;height:513.5px;background:#1a1a1d;border-radius:6px"></div>
<div class="a" style="left:39.0px;top:161.8px;width:32.0px;height:32.0px;background:#4a6fd3;border-radius:50%"></div>
<div class="a" style="left:79.0px;top:161.8px;width:32.0px;height:32.0px;background:#80aae8;border-radius:50%"></div>
<div class="t" style="left:119.9px;top:166.1px;font-size:23.59px;color:#f2f2f2;font-weight:bold;-webkit-text-stroke:0;transform:scaleX(0.9607);transform-origin:0 0;">subsystemName</div>
<div class="a" style="left:23.0px;top:203.4px;width:855.0px;height:2.0px;background:#2c2c2f;"></div>
<div class="t" style="left:39.0px;top:237.0px;font-size:23.45px;color:#f2f2f2;transform:scaleX(1.0472);transform-origin:0 0;">frontend</div>
<div class="a" style="left:39.0px;top:274.3px;width:655.0px;height:23.6px;background:#333336;border-radius:0 4px 4px 0"></div>
<div class="a" style="left:39.0px;top:274.3px;width:267.9px;height:23.6px;background:#4a6fd3;border-radius:0 4px 4px 0"></div>
<div class="t" style="left:47.5px;top:274.1px;font-size:22.64px;color:#ffffff;font-weight:bold;-webkit-text-stroke:0;">40.9%</div>
<div class="a" style="left:39.0px;top:310.2px;width:655.0px;height:23.6px;background:#333336;border-radius:0 4px 4px 0"></div>
<div class="a" style="left:39.0px;top:310.2px;width:269.2px;height:23.6px;background:#80aae8;border-radius:0 4px 4px 0"></div>
<div class="t" style="left:47.5px;top:310.0px;font-size:22.64px;color:#ffffff;font-weight:bold;-webkit-text-stroke:0;">41.1%</div>
<div class="t" style="left:808.1px;top:290.7px;font-size:23.21px;color:#b0b0b5;">0.5%</div>
<svg style="left:784.1px;top:293.2px;" width="16" height="19" viewBox="0 0 16 19"><path d="M8 0.5V18M1 11l7 7 7-7" stroke="#b0b0b5" stroke-width="2" fill="none" stroke-linecap="round" stroke-linejoin="round"/></svg>
<div class="t" style="left:784.9px;top:237.3px;font-size:25.44px;color:#f2f2f2;transform:scaleX(0.9948);transform-origin:0 0;">Diff</div>
<svg style="left:837.9px;top:239.1px;" width="16" height="19" viewBox="0 0 16 19"><path d="M8 0.5V18M1 11l7 7 7-7" stroke="#b0b0b5" stroke-width="2" fill="none" stroke-linecap="round" stroke-linejoin="round"/></svg>
<div class="t" style="left:39.0px;top:361.0px;font-size:23.45px;color:#f2f2f2;transform:scaleX(1.0368);transform-origin:0 0;">productcatalogservice</div>
<div class="a" style="left:39.0px;top:398.3px;width:655.0px;height:23.6px;background:#333336;border-radius:0 4px 4px 0"></div>
<div class="a" style="left:39.0px;top:398.3px;width:128.4px;height:23.6px;background:#4a6fd3;border-radius:0 4px 4px 0"></div>
<div class="t" style="left:47.5px;top:398.1px;font-size:22.64px;color:#ffffff;font-weight:bold;-webkit-text-stroke:0;">19.6%</div>
<div class="a" style="left:39.0px;top:434.2px;width:655.0px;height:23.6px;background:#333336;border-radius:0 4px 4px 0"></div>
<div class="a" style="left:39.0px;top:434.2px;width:128.4px;height:23.6px;background:#80aae8;border-radius:0 4px 4px 0"></div>
<div class="t" style="left:47.5px;top:434.0px;font-size:22.64px;color:#ffffff;font-weight:bold;-webkit-text-stroke:0;">19.6%</div>
<div class="t" style="left:808.1px;top:414.7px;font-size:23.21px;color:#b0b0b5;">0.4%</div>
<svg style="left:784.1px;top:417.2px;" width="16" height="19" viewBox="0 0 16 19"><path d="M8 0.5V18M1 11l7 7 7-7" stroke="#b0b0b5" stroke-width="2" fill="none" stroke-linecap="round" stroke-linejoin="round"/></svg>
<div class="t" style="left:39.0px;top:485.0px;font-size:23.45px;color:#f2f2f2;transform:scaleX(1.0111);transform-origin:0 0;">currencyservice</div>
<div class="a" style="left:39.0px;top:522.3px;width:655.0px;height:23.6px;background:#333336;border-radius:0 4px 4px 0"></div>
<div class="a" style="left:39.0px;top:522.3px;width:83.2px;height:23.6px;background:#4a6fd3;border-radius:0 4px 4px 0"></div>
<div class="t" style="left:47.5px;top:522.1px;font-size:22.64px;color:#ffffff;font-weight:bold;-webkit-text-stroke:0;">12.7%</div>
<div class="a" style="left:39.0px;top:558.2px;width:655.0px;height:23.6px;background:#333336;border-radius:0 4px 4px 0"></div>
<div class="a" style="left:39.0px;top:558.2px;width:83.8px;height:23.6px;background:#80aae8;border-radius:0 4px 4px 0"></div>
<div class="t" style="left:47.5px;top:558.0px;font-size:22.64px;color:#ffffff;font-weight:bold;-webkit-text-stroke:0;">12.8%</div>
<div class="t" style="left:808.1px;top:538.7px;font-size:23.21px;color:#b0b0b5;">0.4%</div>
<svg style="left:784.1px;top:541.2px;" width="16" height="19" viewBox="0 0 16 19"><path d="M8 0.5V18M1 11l7 7 7-7" stroke="#b0b0b5" stroke-width="2" fill="none" stroke-linecap="round" stroke-linejoin="round"/></svg>
<div class="t" style="left:55.0px;top:614.1px;font-size:24.71px;color:#58ad6b;transform:scaleX(0.9922);transform-origin:0 0;">Show more</div>
<div class="a" style="left:910.0px;top:152.0px;width:855.0px;height:513.5px;background:#1a1a1d;border-radius:6px"></div>
<div class="a" style="left:926.0px;top:161.8px;width:32.0px;height:32.0px;background:#4a6fd3;border-radius:50%"></div>
<div class="a" style="left:966.0px;top:161.8px;width:32.0px;height:32.0px;background:#80aae8;border-radius:50%"></div>
<div class="t" style="left:1006.9px;top:166.1px;font-size:23.59px;color:#f2f2f2;font-weight:bold;-webkit-text-stroke:0;transform:scaleX(0.9604);transform-origin:0 0;">serviceName</div>
<div class="a" style="left:910.0px;top:203.4px;width:855.0px;height:2.0px;background:#2c2c2f;"></div>
<div class="t" style="left:926.0px;top:237.0px;font-size:23.45px;color:#f2f2f2;transform:scaleX(1.0472);transform-origin:0 0;">frontend</div>
<div class="a" style="left:926.0px;top:274.3px;width:655.0px;height:23.6px;background:#333336;border-radius:0 4px 4px 0"></div>
<div class="a" style="left:926.0px;top:274.3px;width:267.9px;height:23.6px;background:#4a6fd3;border-radius:0 4px 4px 0"></div>
<div class="t" style="left:934.5px;top:274.1px;font-size:22.64px;color:#ffffff;font-weight:bold;-webkit-text-stroke:0;">40.9%</div>
<div class="a" style="left:926.0px;top:310.2px;width:655.0px;height:23.6px;background:#333336;border-radius:0 4px 4px 0"></div>
<div class="a" style="left:926.0px;top:310.2px;width:269.2px;height:23.6px;background:#80aae8;border-radius:0 4px 4px 0"></div>
<div class="t" style="left:934.5px;top:310.0px;font-size:22.64px;color:#ffffff;font-weight:bold;-webkit-text-stroke:0;">41.1%</div>
<div class="t" style="left:1695.1px;top:290.7px;font-size:23.21px;color:#b0b0b5;">0.5%</div>
<svg style="left:1671.1px;top:293.2px;" width="16" height="19" viewBox="0 0 16 19"><path d="M8 0.5V18M1 11l7 7 7-7" stroke="#b0b0b5" stroke-width="2" fill="none" stroke-linecap="round" stroke-linejoin="round"/></svg>
<div class="t" style="left:1671.9px;top:237.3px;font-size:25.44px;color:#f2f2f2;transform:scaleX(0.9948);transform-origin:0 0;">Diff</div>
<svg style="left:1724.9px;top:239.1px;" width="16" height="19" viewBox="0 0 16 19"><path d="M8 0.5V18M1 11l7 7 7-7" stroke="#b0b0b5" stroke-width="2" fill="none" stroke-linecap="round" stroke-linejoin="round"/></svg>
<div class="t" style="left:926.0px;top:361.0px;font-size:23.45px;color:#f2f2f2;transform:scaleX(1.0368);transform-origin:0 0;">productcatalogservice</div>
<div class="a" style="left:926.0px;top:398.3px;width:655.0px;height:23.6px;background:#333336;border-radius:0 4px 4px 0"></div>
<div class="a" style="left:926.0px;top:398.3px;width:128.4px;height:23.6px;background:#4a6fd3;border-radius:0 4px 4px 0"></div>
<div class="t" style="left:934.5px;top:398.1px;font-size:22.64px;color:#ffffff;font-weight:bold;-webkit-text-stroke:0;">19.6%</div>
<div class="a" style="left:926.0px;top:434.2px;width:655.0px;height:23.6px;background:#333336;border-radius:0 4px 4px 0"></div>
<div class="a" style="left:926.0px;top:434.2px;width:128.4px;height:23.6px;background:#80aae8;border-radius:0 4px 4px 0"></div>
<div class="t" style="left:934.5px;top:434.0px;font-size:22.64px;color:#ffffff;font-weight:bold;-webkit-text-stroke:0;">19.6%</div>
<div class="t" style="left:1695.1px;top:414.7px;font-size:23.21px;color:#b0b0b5;">0.4%</div>
<svg style="left:1671.1px;top:417.2px;" width="16" height="19" viewBox="0 0 16 19"><path d="M8 0.5V18M1 11l7 7 7-7" stroke="#b0b0b5" stroke-width="2" fill="none" stroke-linecap="round" stroke-linejoin="round"/></svg>
<div class="t" style="left:926.0px;top:485.0px;font-size:23.45px;color:#f2f2f2;transform:scaleX(1.0111);transform-origin:0 0;">currencyservice</div>
<div class="a" style="left:926.0px;top:522.3px;width:655.0px;height:23.6px;background:#333336;border-radius:0 4px 4px 0"></div>
<div class="a" style="left:926.0px;top:522.3px;width:83.2px;height:23.6px;background:#4a6fd3;border-radius:0 4px 4px 0"></div>
<div class="t" style="left:934.5px;top:522.1px;font-size:22.64px;color:#ffffff;font-weight:bold;-webkit-text-stroke:0;">12.7%</div>
<div class="a" style="left:926.0px;top:558.2px;width:655.0px;height:23.6px;background:#333336;border-radius:0 4px 4px 0"></div>
<div class="a" style="left:926.0px;top:558.2px;width:83.8px;height:23.6px;background:#80aae8;border-radius:0 4px 4px 0"></div>
<div class="t" style="left:934.5px;top:558.0px;font-size:22.64px;color:#ffffff;font-weight:bold;-webkit-text-stroke:0;">12.8%</div>
<div class="t" style="left:1695.1px;top:538.7px;font-size:23.21px;color:#b0b0b5;">0.4%</div>
<svg style="left:1671.1px;top:541.2px;" width="16" height="19" viewBox="0 0 16 19"><path d="M8 0.5V18M1 11l7 7 7-7" stroke="#b0b0b5" stroke-width="2" fill="none" stroke-linecap="round" stroke-linejoin="round"/></svg>
<div class="t" style="left:942.0px;top:614.1px;font-size:24.71px;color:#58ad6b;transform:scaleX(0.9922);transform-origin:0 0;">Show more</div>
<div class="a" style="left:23.0px;top:690.3px;width:855.0px;height:512.7px;background:#1a1a1d;border-radius:6px"></div>
<svg style="left:39px;top:700.1px;" width="32" height="32" viewBox="0 0 32 32"><circle cx="16" cy="16" r="16" fill="#4a6fd3"/><path d="M16 16V2.6A13.4 13.4 0 0 0 2.9 19.3Z" fill="#1a1a1d"/><path d="M16 2.5A13.5 13.5 0 0 0 2.5 16" stroke="#000" stroke-width="0" fill="none"/></svg>
<svg style="left:79px;top:700.1px;" width="32" height="32" viewBox="0 0 32 32"><circle cx="16" cy="16" r="16" fill="#80aae8"/><path d="M16 16V2.6A13.4 13.4 0 0 0 2.9 19.3Z" fill="#1a1a1d"/><path d="M16 2.5A13.5 13.5 0 0 0 2.5 16" stroke="#000" stroke-width="0" fill="none"/></svg>
<div class="t" style="left:119.9px;top:704.4px;font-size:23.59px;color:#f2f2f2;font-weight:bold;-webkit-text-stroke:0;transform:scaleX(0.9632);transform-origin:0 0;">rpc.method</div>
<div class="a" style="left:23.0px;top:741.7px;width:855.0px;height:2.0px;background:#2c2c2f;"></div>
<div class="t" style="left:39.0px;top:775.0px;font-size:23.45px;color:#f2f2f2;transform:scaleX(1.0312);transform-origin:0 0;">GetProduct</div>
<div class="a" style="left:39.0px;top:812.3px;width:655.0px;height:23.6px;background:#333336;border-radius:0 4px 4px 0"></div>
<div class="a" style="left:39.0px;top:812.3px;width:305.9px;height:23.6px;background:#4a6fd3;border-radius:0 4px 4px 0"></div>
<div class="t" style="left:47.5px;top:812.1px;font-size:22.64px;color:#ffffff;font-weight:bold;-webkit-text-stroke:0;">46.7%</div>
<div class="a" style="left:39.0px;top:848.2px;width:655.0px;height:23.6px;background:#333336;border-radius:0 4px 4px 0"></div>
<div class="a" style="left:39.0px;top:848.2px;width:305.9px;height:23.6px;background:#80aae8;border-radius:0 4px 4px 0"></div>
<div class="t" style="left:47.5px;top:848.0px;font-size:22.64px;color:#ffffff;font-weight:bold;-webkit-text-stroke:0;">46.7%</div>
<div class="t" style="left:827.5px;top:828.7px;font-size:23.21px;color:#b0b0b5;">0%</div>
<svg style="left:803.5px;top:831.2px;" width="16" height="19" viewBox="0 0 16 19"><path d="M8 0.5V18M1 11l7 7 7-7" stroke="#b0b0b5" stroke-width="2" fill="none" stroke-linecap="round" stroke-linejoin="round"/></svg>
<div class="t" style="left:784.9px;top:775.3px;font-size:25.44px;color:#f2f2f2;transform:scaleX(0.9948);transform-origin:0 0;">Diff</div>
<svg style="left:837.9px;top:777.1px;" width="16" height="19" viewBox="0 0 16 19"><path d="M8 0.5V18M1 11l7 7 7-7" stroke="#b0b0b5" stroke-width="2" fill="none" stroke-linecap="round" stroke-linejoin="round"/></svg>
<div class="t" style="left:39.0px;top:899.0px;font-size:23.45px;color:#f2f2f2;transform:scaleX(1.0292);transform-origin:0 0;">Convert</div>
<div class="a" style="left:39.0px;top:936.3px;width:655.0px;height:23.6px;background:#333336;border-radius:0 4px 4px 0"></div>
<div class="a" style="left:39.0px;top:936.3px;width:89.7px;height:23.6px;background:#4a6fd3;border-radius:0 4px 4px 0"></div>
<div class="t" style="left:47.5px;top:936.1px;font-size:22.64px;color:#ffffff;font-weight:bold;-webkit-text-stroke:0;">13.7%</div>
<div class="a" style="left:39.0px;top:972.2px;width:655.0px;height:23.6px;background:#333336;border-radius:0 4px 4px 0"></div>
<div class="a" style="left:39.0px;top:972.2px;width:89.7px;height:23.6px;background:#80aae8;border-radius:0 4px 4px 0"></div>
<div class="t" style="left:47.5px;top:972.0px;font-size:22.64px;color:#ffffff;font-weight:bold;-webkit-text-stroke:0;">13.7%</div>
<div class="t" style="left:827.5px;top:952.7px;font-size:23.21px;color:#b0b0b5;">0%</div>
<svg style="left:803.5px;top:955.2px;" width="16" height="19" viewBox="0 0 16 19"><path d="M8 18.5V1M1 8L8 1l7 7" stroke="#b0b0b5" stroke-width="2" fill="none" stroke-linecap="round" stroke-linejoin="round"/></svg>
<div class="t" style="left:39.0px;top:1023.0px;font-size:23.45px;color:#f2f2f2;transform:scaleX(1.0293);transform-origin:0 0;">GetCart</div>
<div class="a" style="left:39.0px;top:1060.3px;width:655.0px;height:23.6px;background:#333336;border-radius:0 4px 4px 0"></div>
<div class="a" style="left:39.0px;top:1060.3px;width:55.0px;height:23.6px;background:#4a6fd3;border-radius:0 4px 4px 0"></div>
<div class="t" style="left:47.5px;top:1060.1px;font-size:22.64px;color:#ffffff;font-weight:bold;-webkit-text-stroke:0;">8.4%</div>
<div class="a" style="left:39.0px;top:1096.2px;width:655.0px;height:23.6px;background:#333336;border-radius:0 4px 4px 0"></div>
<div class="a" style="left:39.0px;top:1096.2px;width:55.0px;height:23.6px;background:#80aae8;border-radius:0 4px 4px 0"></div>
<div class="t" style="left:47.5px;top:1096.0px;font-size:22.64px;color:#ffffff;font-weight:bold;-webkit-text-stroke:0;">8.4%</div>
<div class="t" style="left:827.5px;top:1076.7px;font-size:23.21px;color:#b0b0b5;">0%</div>
<svg style="left:803.5px;top:1079.2px;" width="16" height="19" viewBox="0 0 16 19"><path d="M8 18.5V1M1 8L8 1l7 7" stroke="#b0b0b5" stroke-width="2" fill="none" stroke-linecap="round" stroke-linejoin="round"/></svg>
<div class="t" style="left:55.0px;top:1151.8px;font-size:24.71px;color:#58ad6b;transform:scaleX(0.9922);transform-origin:0 0;">Show more</div>
<div class="a" style="left:910.0px;top:690.3px;width:855.0px;height:449.1px;background:#1a1a1d;border-radius:6px"></div>
<svg style="left:926px;top:700.1px;" width="32" height="32" viewBox="0 0 32 32"><circle cx="16" cy="16" r="14.8" stroke="#4a6fd3" stroke-width="2.4" fill="none"/><path d="M16 16V3A13 13 0 0 1 25.2 6.8Z" fill="#4a6fd3"/></svg>
<svg style="left:966px;top:700.1px;" width="32" height="32" viewBox="0 0 32 32"><circle cx="16" cy="16" r="14.8" stroke="#80aae8" stroke-width="2.4" fill="none"/><path d="M16 16V3A13 13 0 0 1 25.2 6.8Z" fill="#80aae8"/></svg>
<div class="t" style="left:1006.9px;top:704.4px;font-size:23.59px;color:#f2f2f2;font-weight:bold;-webkit-text-stroke:0;transform:scaleX(0.9455);transform-origin:0 0;">cloud.region</div>
<div class="a" style="left:910.0px;top:741.7px;width:855.0px;height:2.0px;background:#2c2c2f;"></div>
<div class="t" style="left:926.0px;top:775.0px;font-size:23.45px;color:#f2f2f2;transform:scaleX(1.0691);transform-origin:0 0;">us-east-2</div>
<div class="a" style="left:926.0px;top:812.3px;width:655.0px;height:23.6px;background:#333336;border-radius:0 4px 4px 0"></div>
<div class="a" style="left:926.0px;top:812.3px;width:573.8px;height:23.6px;background:#4a6fd3;border-radius:0 4px 4px 0"></div>
<div class="t" style="left:934.5px;top:812.1px;font-size:22.64px;color:#ffffff;font-weight:bold;-webkit-text-stroke:0;">87.6%</div>
<div class="a" style="left:926.0px;top:848.2px;width:655.0px;height:23.6px;background:#333336;border-radius:0 4px 4px 0"></div>
<div class="a" style="left:926.0px;top:848.2px;width:575.1px;height:23.6px;background:#80aae8;border-radius:0 4px 4px 0"></div>
<div class="t" style="left:934.5px;top:848.0px;font-size:22.64px;color:#ffffff;font-weight:bold;-webkit-text-stroke:0;">87.8%</div>
<div class="t" style="left:1695.1px;top:828.7px;font-size:23.21px;color:#b0b0b5;">0.2%</div>
<svg style="left:1671.1px;top:831.2px;" width="16" height="19" viewBox="0 0 16 19"><path d="M8 0.5V18M1 11l7 7 7-7" stroke="#b0b0b5" stroke-width="2" fill="none" stroke-linecap="round" stroke-linejoin="round"/></svg>
<div class="t" style="left:1671.9px;top:775.3px;font-size:25.44px;color:#f2f2f2;transform:scaleX(0.9948);transform-origin:0 0;">Diff</div>
<svg style="left:1724.9px;top:777.1px;" width="16" height="19" viewBox="0 0 16 19"><path d="M8 0.5V18M1 11l7 7 7-7" stroke="#b0b0b5" stroke-width="2" fill="none" stroke-linecap="round" stroke-linejoin="round"/></svg>
<div class="t" style="left:926.0px;top:899.0px;font-size:23.45px;color:#f2f2f2;transform:scaleX(1.0879);transform-origin:0 0;">eu-north-1</div>
<div class="a" style="left:926.0px;top:936.3px;width:655.0px;height:23.6px;background:#333336;border-radius:0 4px 4px 0"></div>
<div class="a" style="left:926.0px;top:936.3px;width:62.2px;height:23.6px;background:#4a6fd3;border-radius:0 4px 4px 0"></div>
<div class="t" style="left:934.5px;top:936.1px;font-size:22.64px;color:#ffffff;font-weight:bold;-webkit-text-stroke:0;">9.5%</div>
<div class="a" style="left:926.0px;top:972.2px;width:655.0px;height:23.6px;background:#333336;border-radius:0 4px 4px 0"></div>
<div class="a" style="left:926.0px;top:972.2px;width:60.9px;height:23.6px;background:#80aae8;border-radius:0 4px 4px 0"></div>
<div class="t" style="left:934.5px;top:972.0px;font-size:22.64px;color:#ffffff;font-weight:bold;-webkit-text-stroke:0;">9.3%</div>
<div class="t" style="left:1695.1px;top:952.7px;font-size:23.21px;color:#b0b0b5;">1.9%</div>
<svg style="left:1671.1px;top:955.2px;" width="16" height="19" viewBox="0 0 16 19"><path d="M8 18.5V1M1 8L8 1l7 7" stroke="#b0b0b5" stroke-width="2" fill="none" stroke-linecap="round" stroke-linejoin="round"/></svg>
<div class="t" style="left:926.0px;top:1023.0px;font-size:23.45px;color:#f2f2f2;transform:scaleX(1.0820);transform-origin:0 0;">eu-west-1</div>
<div class="a" style="left:926.0px;top:1060.3px;width:655.0px;height:23.6px;background:#333336;border-radius:0 4px 4px 0"></div>
<div class="a" style="left:926.0px;top:1060.3px;width:19.0px;height:23.6px;background:#4a6fd3;border-radius:0 4px 4px 0"></div>
<div class="t" style="left:934.5px;top:1060.1px;font-size:22.64px;color:#ffffff;font-weight:bold;-webkit-text-stroke:0;">2.9%</div>
<div class="a" style="left:926.0px;top:1096.2px;width:655.0px;height:23.6px;background:#333336;border-radius:0 4px 4px 0"></div>
<div class="a" style="left:926.0px;top:1096.2px;width:19.0px;height:23.6px;background:#80aae8;border-radius:0 4px 4px 0"></div>
<div class="t" style="left:934.5px;top:1096.0px;font-size:22.64px;color:#ffffff;font-weight:bold;-webkit-text-stroke:0;">2.9%</div>
<div class="t" style="left:1695.1px;top:1076.7px;font-size:23.21px;color:#b0b0b5;">0.1%</div>
<svg style="left:1671.1px;top:1079.2px;" width="16" height="19" viewBox="0 0 16 19"><path d="M8 0.5V18M1 11l7 7 7-7" stroke="#b0b0b5" stroke-width="2" fill="none" stroke-linecap="round" stroke-linejoin="round"/></svg>
<div class="a" style="left:1081.0px;top:730.4px;width:344.6px;height:61.4px;background:#343b4b;border-radius:8px"></div>
<svg style="left:1239px;top:791px;" width="30" height="14" viewBox="0 0 30 14"><path d="M0 0h30L15 14Z" fill="#343b4b"/></svg>
<div class="t" style="left:1099.6px;top:745.3px;font-size:28.94px;color:#f2f2f2;transform:scaleX(0.9798);transform-origin:0 0;">285.50K of 2.20M spans</div>
<div class="t" style="left:1282.4px;top:1255.2px;font-size:24.07px;color:#c0c0c5;font-weight:bold;-webkit-text-stroke:0;transform:scaleX(1.0172);transform-origin:0 0;">11 – 20 of 186</div>
<svg style="left:1471px;top:1256px;" width="20" height="24" viewBox="0 0 20 24"><path d="M2 2v20M17 3L8 12l9 9" stroke="#b8b8bd" stroke-width="2" fill="none" stroke-linecap="round"/></svg>
<svg style="left:1509px;top:1257px;" width="14" height="22" viewBox="0 0 14 22"><path d="M11 2L3 11l8 9" stroke="#b8b8bd" stroke-width="2" fill="none" stroke-linecap="round"/></svg>
<svg style="left:1548px;top:1257px;" width="14" height="22" viewBox="0 0 14 22"><path d="M3 2l8 9-8 9" stroke="#b8b8bd" stroke-width="2" fill="none" stroke-linecap="round"/></svg>
<svg style="left:1579px;top:1256px;" width="20" height="24" viewBox="0 0 20 24"><path d="M18 2v20M3 3l9 9-9 9" stroke="#b8b8bd" stroke-width="2" fill="none" stroke-linecap="round"/></svg>
<div class="a" style="left:1653.2px;top:1111.8px;width:95.6px;height:95.6px;background:#5cc6a9;border-radius:50%"></div>
<svg style="left:1680px;top:1135px;" width="44" height="48" viewBox="0 0 44 48"><path d="M4 1h34a3 3 0 0 1 3 3v43l-9-4H4a3 3 0 0 1-3-3V4a3 3 0 0 1 3-3Z" fill="#16171a"/><path d="M7 31q14 9 28 0" stroke="#5cc6a9" stroke-width="3" fill="none" stroke-linecap="round"/></svg>
</div>
</body></html>
